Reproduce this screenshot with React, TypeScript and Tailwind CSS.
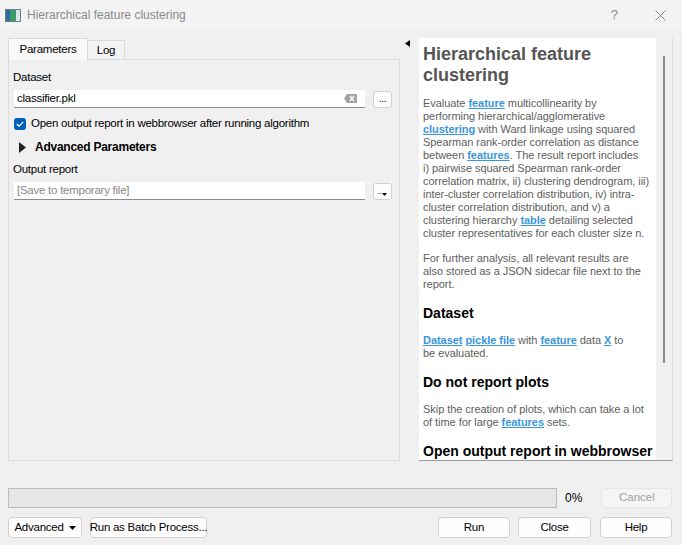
import React from 'react';

const ui = { fontFamily: '"Liberation Sans", Arial, sans-serif' };

function Link({ children }: { children: React.ReactNode }) {
  return <span className="font-bold text-[#3a96dd] underline underline-offset-[1px]">{children}</span>;
}

function Btn({ children, className = '' }: { children: React.ReactNode; className?: string }) {
  return (
    <div
      className={`flex h-[21px] items-center justify-center whitespace-nowrap rounded-[4px] border border-[#d0d0d0] bg-[#fdfdfd] text-[11.5px] tracking-[-0.25px] text-black ${className}`}
    >
      {children}
    </div>
  );
}

function ClearIcon() {
  return (
    <svg width="13" height="9" viewBox="0 0 13 9">
      <path d="M3 0 H13 V9 H3 L0 4.5 Z" fill="#a3a3a3" />
      <path d="M6 2 L10 7 M10 2 L6 7" stroke="#fff" strokeWidth="1.3" />
    </svg>
  );
}

function HelpPanel() {
  const body = 'text-[11px] tracking-[-0.05px] leading-[13px] text-[#606060] whitespace-nowrap';
  const h2 = 'text-[14px] leading-[16px] font-bold text-black whitespace-nowrap';
  return (
    <div className="flex h-[423px] w-[254px] border-r border-b border-r-[#dcdcdc] border-b-[#9a9a9a]" style={ui}>
      <div className="flex-1 overflow-hidden bg-white pl-[4px] pt-[6px]">
        <div className="text-[18px] leading-[21px] font-bold text-[#555]">
          <div>Hierarchical feature</div>
          <div>clustering</div>
        </div>
        <div className={`${body} mt-[11px]`}>
          <div>Evaluate <Link>feature</Link> multicollinearity by</div>
          <div>performing hierarchical/agglomerative</div>
          <div><Link>clustering</Link> with Ward linkage using squared</div>
          <div>Spearman rank-order correlation as distance</div>
          <div>between <Link>features</Link>. The result report includes</div>
          <div>i) pairwise squared Spearman rank-order</div>
          <div>correlation matrix, ii) clustering dendrogram, iii)</div>
          <div>inter-cluster correlation distribution, iv) intra-</div>
          <div>cluster correlation distribution, and v) a</div>
          <div>clustering hierarchy <Link>table</Link> detailing selected</div>
          <div>cluster representatives for each cluster size n.</div>
        </div>
        <div className={`${body} mt-[12px]`}>
          <div>For further analysis, all relevant results are</div>
          <div>also stored as a JSON sidecar file next to the</div>
          <div>report.</div>
        </div>
        <div className={`${h2} mt-[14px]`}>Dataset</div>
        <div className={`${body} mt-[13px]`}>
          <div><Link>Dataset</Link> <Link>pickle file</Link> with <Link>feature</Link> data <Link>X</Link> to</div>
          <div>be evaluated.</div>
        </div>
        <div className={`${h2} mt-[14px]`}>Do not report plots</div>
        <div className={`${body} mt-[13px]`}>
          <div>Skip the creation of plots, which can take a lot</div>
          <div>of time for large <Link>features</Link> sets.</div>
        </div>
        <div className={`${h2} mt-[14px]`}>Open output report in webbrowser</div>
      </div>
      <div className="w-[16px] bg-[#f0f0f0] pt-[18px] pl-[7px]">
        <div className="h-[307px] w-[2px] bg-[#8a8a8a]" />
      </div>
    </div>
  );
}

function ParamsPane() {
  return (
    <div className="flex w-[392px] flex-col text-[11.5px] tracking-[-0.25px]" style={ui}>
      <div className="flex h-[22px] items-end">
        <div className="relative z-10 flex h-[22px] w-[80px] items-center justify-center border border-b-0 border-[#d9d9d9] bg-[#f9f9f9]">
          Parameters
        </div>
        <div className="flex h-[20px] w-[37px] items-center justify-center border border-l-0 border-b-0 border-[#d9d9d9] bg-[#f3f3f3]">
          Log
        </div>
      </div>
      <div className="-mt-[1px] flex h-[402px] flex-col border border-[#dcdcdc] bg-[#f0f0f0] pl-[4px] pt-[9px] text-black">
        <div className="h-[16px] leading-[16px]">Dataset</div>
        <div className="mt-[5px] flex items-center">
          <div className="ml-[1px] flex h-[18px] w-[351px] items-center justify-between border-b border-[#8a8a8a] bg-white pl-[3px] pr-[8px]">
            <span>classifier.pkl</span>
            <ClearIcon />
          </div>
          <div className="ml-[8px] flex h-[17px] w-[19px] items-center justify-center rounded-[3px] border border-[#d0d0d0] bg-[#fdfdfd] text-[10px] leading-none">
            ...
          </div>
        </div>
        <div className="mt-[8px] flex h-[16px] items-center">
          <div className="ml-[1px] flex h-[12px] w-[12px] items-center justify-center rounded-[3px] bg-[#005fb8]">
            <svg width="8" height="6" viewBox="0 0 8 6">
              <path d="M0.7 3 L3 5.2 L7.3 0.8" stroke="#fff" strokeWidth="1.2" fill="none" />
            </svg>
          </div>
          <span className="ml-[5px]">Open output report in webbrowser after running algorithm</span>
        </div>
        <div className="mt-[7px] flex h-[16px] items-center">
          <svg className="ml-[6px]" width="7" height="11" viewBox="0 0 7 11">
            <path d="M0 0 L7 5.5 L0 11 Z" fill="#222" />
          </svg>
          <span className="ml-[9px] text-[12px] font-bold">Advanced Parameters</span>
        </div>
        <div className="mt-[6px] h-[16px] leading-[16px]">Output report</div>
        <div className="mt-[5px] flex items-center">
          <div className="ml-[1px] flex h-[18px] w-[351px] items-center border-b border-[#8a8a8a] bg-white pl-[3px] text-[#8a8a8a]">
            [Save to temporary file]
          </div>
          <div className="ml-[8px] flex h-[17px] w-[19px] items-end justify-center gap-[1px] rounded-[3px] border border-[#d0d0d0] bg-[#fdfdfd] pb-[3px] text-[8px] leading-none">
            <span>..</span>
            <svg width="5" height="3" viewBox="0 0 5 3"><path d="M0 0 H5 L2.5 3 Z" fill="#000" /></svg>
          </div>
        </div>
      </div>
    </div>
  );
}

export default function App() {
  return (
    <div className="flex h-[545px] w-[682px] flex-col bg-[#f0f0f0]" style={ui}>
      <div className="flex h-[30px] items-center bg-[#f3f3f3] pl-[5px]">
        <svg width="16" height="13" viewBox="0 0 16 13">
          <rect x="0" y="0" width="16" height="13" fill="#6a7f8f" />
          <rect x="1" y="1" width="4" height="11" fill="#2e6b9e" />
          <rect x="5" y="1" width="6" height="11" fill="#3c9a6c" />
          <rect x="11" y="1" width="4" height="11" fill="#dfe6ea" />
        </svg>
        <span className="ml-[6px] text-[12px] text-[#8a8a8a]">Hierarchical feature clustering</span>
        <span className="ml-auto text-[13px] text-[#8a8a8a]">?</span>
        <svg className="ml-[37px] mr-[16px]" width="11" height="11" viewBox="0 0 11 11">
          <path d="M0.5 0.5 L10.5 10.5 M10.5 0.5 L0.5 10.5" stroke="#8a8a8a" strokeWidth="1" />
        </svg>
      </div>
      <div className="mt-[8px] flex pl-[8px]">
        <ParamsPane />
        <div className="w-[19px] pt-[2px] pl-[5px]">
          <svg width="5" height="7" viewBox="0 0 5 7"><path d="M5 0 V7 L0 3.5 Z" fill="#000" /></svg>
        </div>
        <HelpPanel />
      </div>
      <div className="mt-[27px] flex items-center pl-[8px]">
        <div className="h-[20px] w-[549px] border border-[#bcbcbc] bg-[#e6e6e6]" />
        <span className="ml-[8px] text-[12px]">0%</span>
        <div className="ml-[19px] flex h-[20px] w-[71px] items-center justify-center rounded-[4px] border border-[#e5e5e5] bg-[#f5f5f5] text-[11.5px] text-[#a0a0a0]">
          Cancel
        </div>
      </div>
      <div className="mt-[9px] flex items-center pl-[8px] pr-[10px]">
        <Btn className="w-[74px] gap-[5px]">
          <span>Advanced</span>
          <svg width="7" height="4" viewBox="0 0 7 4"><path d="M0 0 H7 L3.5 4 Z" fill="#000" /></svg>
        </Btn>
        <Btn className="ml-[8px] w-[117px]">Run as Batch Process...</Btn>
        <Btn className="ml-auto w-[72px]">Run</Btn>
        <Btn className="ml-[8px] w-[73px]">Close</Btn>
        <Btn className="ml-[9px] w-[72px]">Help</Btn>
      </div>
    </div>
  );
}
